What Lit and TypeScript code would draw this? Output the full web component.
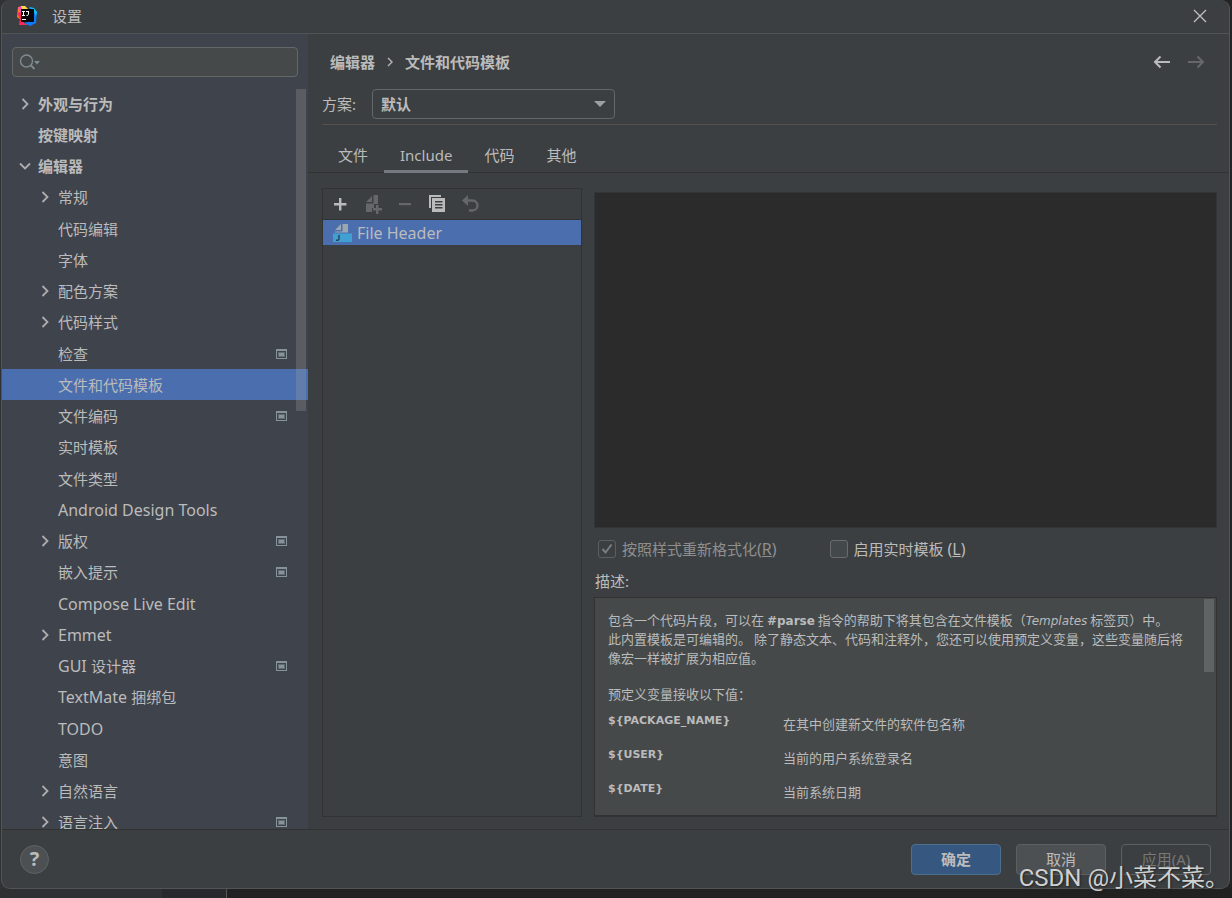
import { LitElement, html, css, svg, nothing } from "lit";
import { customElement, property, state } from "lit/decorators.js";
import { classMap } from "lit/directives/class-map.js";

type Arrow = "open" | "closed" | "";
interface TreeItem {
  label: string;
  level: 0 | 1;
  arrow: Arrow;
  project?: boolean;
}

const item = (label: string, level: 0 | 1 = 1, arrow: Arrow = "", project = false): TreeItem => ({
  label,
  level,
  arrow,
  project,
});

const TREE: TreeItem[] = [
  item("外观与行为", 0, "closed"),
  item("按键映射", 0),
  item("编辑器", 0, "open"),
  item("常规", 1, "closed"),
  item("代码编辑"),
  item("字体"),
  item("配色方案", 1, "closed"),
  item("代码样式", 1, "closed"),
  item("检查", 1, "", true),
  item("文件和代码模板"),
  item("文件编码", 1, "", true),
  item("实时模板"),
  item("文件类型"),
  item("Android Design Tools"),
  item("版权", 1, "closed", true),
  item("嵌入提示", 1, "", true),
  item("Compose Live Edit"),
  item("Emmet", 1, "closed"),
  item("GUI 设计器", 1, "", true),
  item("TextMate 捆绑包"),
  item("TODO"),
  item("意图"),
  item("自然语言", 1, "closed"),
  item("语言注入", 1, "closed", true),
];

const TABS = ["文件", "Include", "代码", "其他"];

const VARIABLES = [
  ["${PACKAGE_NAME}", "在其中创建新文件的软件包名称"],
  ["${USER}", "当前的用户系统登录名"],
  ["${DATE}", "当前系统日期"],
];

const ART: Record<string, unknown> = {
  add: svg`<path d="M9 4h2.400v5h5v2.400h-5v5H9v-5H4V9h5z"/>`,
  addFile: svg`<path d="M9 2v6H3zM10.500 1H15v9h-4v4H9v4H3V9.500h7.500z"/><path d="M13 11h2.500v3H19v2.500h-3.500V20H13v-3.500h-3V14h3z"/>`,
  remove: svg`<path d="M3 9h12v2.200H3z"/>`,
  copy: svg`<path d="M0 1h12v2H2v11H0z"/><path fill-rule="evenodd" d="M3 4h13v14H3zM6 7v1.500h7.500V7zM6 10v1.500h7.500V10zM6 13v1.500h7.500V13z"/>`,
  undo: svg`<path d="M0 6.500 6 1v11z"/><path fill="none" stroke="currentColor" stroke-width="2.300" d="M5 6.500h5.500a5 5 0 0 1 0 10H7"/>`,
};

/** Latin runs are set one size larger than the Chinese text around them. */
const mixed = (text: string) =>
  text.split(/([A-Za-z][A-Za-z ]*)/).filter(Boolean).map((part) => (/^[A-Za-z]/.test(part) ? html`<span class="roman">${part}</span>` : part));

@customElement("tool-icon")
export class ToolIcon extends LitElement {
  @property() name = "";
  static styles = css`
    :host { display: block; width: 20px; height: 20px; }
    .art { display: block; fill: currentColor; }
  `;
  render() {
    return html`<svg class="art" width="20" height="20" viewBox="0 0 20 20" aria-hidden="true">${ART[this.name]}</svg>`;
  }
}

@customElement("settings-tree")
export class SettingsTree extends LitElement {
  @state() private selected = 9;

  static styles = css`
    :host { display: block; position: relative; overflow: hidden; }
    .list { list-style: none; margin: 0; padding: 0; }
    .item { height: 31px; }
    .item:nth-child(4n) { height: 32px; }
    .row {
      display: flex; align-items: center; box-sizing: border-box;
      width: 100%; height: 31px; padding: 0 20px 0 16px; border: 0;
      background: none; color: #bbbbbb; font: inherit; text-align: left;
    }
    .nested { padding-left: 36px; }
    .bold { font-weight: 700; }
    .selected { background: #4b6eaf; }
    .twist { flex: none; width: 20px; height: 16px; }
    .label { flex: 1; white-space: pre; }
    .roman { font-size: 16px; }
    .mark { flex: none; }
    .thumb {
      position: absolute; top: 1px; right: 2px; width: 10px; height: 322px;
      background: rgba(166, 166, 166, 0.26);
    }
  `;

  private twist(arrow: Arrow) {
    const d = arrow === "open" ? "M2 5.500 7 10.500 12 5.500" : "M4.500 3 9.500 8 4.500 13";
    return html`<svg class="twist" viewBox="0 0 20 16" aria-hidden="true">
      ${arrow ? svg`<path d=${d} fill="none" stroke="#adadad" stroke-width="1.800"/>` : nothing}
    </svg>`;
  }

  render() {
    return html`
      <ul class="list">
        ${TREE.map(
          (t, i) => html`<li class="item">
            <button
              class=${classMap({ row: true, nested: t.level === 1, bold: t.level === 0, selected: i === this.selected })}
              @click=${() => (this.selected = i)}
            >
              ${this.twist(t.arrow)}<span class="label">${mixed(t.label)}</span>
              ${t.project
                ? html`<svg class="mark" width="12" height="12" viewBox="0 0 12 12" aria-hidden="true">
                    <path fill="#87939a" fill-rule="evenodd" d="M0 1h11v10H0zM1 3v7h9V3z" />
                    <path fill="#626b73" d="M2 4h7v5H2z" />
                    <path fill="#87939a" d="M3 5h5v3H3z" />
                  </svg>`
                : nothing}
            </button>
          </li>`
        )}
      </ul>
      <div class="thumb"></div>
    `;
  }
}

@customElement("app-root")
export class AppRoot extends LitElement {
  @state() private tab = 1;

  static styles = css`
    :host {
      display: flex; position: relative; box-sizing: border-box; height: 100vh; padding: 0 2px 9px 1px;
      overflow: hidden; color: #bbbbbb;
      font: 15px/20px "Noto Sans", "Noto Sans CJK SC", sans-serif;
      background:
        linear-gradient(90deg, #2f3031 162px, #28292b 162px, #28292b 226px, #555657 226px, #555657 227px, #222121 227px) bottom / 100% 10px no-repeat,
        linear-gradient(90deg, #303234 50%, #242424 50%);
    }
    .window {
      flex: 1; min-width: 0; display: flex; flex-direction: column;
      border: 1px solid #515456; border-top: 0; border-radius: 9px; overflow: hidden;
      background: #3c3f41;
    }
    .titlebar {
      display: flex; align-items: center; height: 32px; flex: none;
      padding: 0 20px 1px 14px; border-bottom: 1px solid #515456;
    }
    .logo { margin-right: 14px; }
    .title { flex: 1; margin: 0; font-size: 15px; font-weight: 400; }
    .plain { display: block; padding: 0; border: 0; background: none; color: inherit; font: inherit; }
    .plain svg { display: block; }
    .roman { font-size: 16px; }

    .body { flex: 1; min-height: 0; display: flex; }
    .sidebar { flex: none; width: 306px; display: flex; flex-direction: column; background: #3f434c; }
    .search {
      display: flex; align-items: center; flex: none; height: 28px; margin: 13px 10px 11px;
      border: 1px solid #646869; border-radius: 4px; background: #45494a;
    }
    .search svg { flex: none; margin-left: 6px; }
    .query {
      flex: 1; min-width: 0; height: 24px; padding: 0 6px; border: 0; outline: 0;
      background: none; color: inherit; font: inherit;
    }
    .tree { flex: 1; min-height: 0; }

    .main { flex: 1; min-width: 0; display: flex; flex-direction: column; }
    .crumbs { display: flex; align-items: center; flex: none; height: 55px; padding: 0 24px 0 22px; font-weight: 700; }
    .crumbs-path { flex: 1; display: flex; align-items: center; gap: 10px; }
    .history { display: flex; gap: 16px; }
    .off { color: #656768; }
    .scheme {
      display: flex; align-items: center; flex: none; height: 30px; margin: 0 12px 0 14px;
      padding-bottom: 5px; border-bottom: 1px solid #55514f;
    }
    .scheme label { width: 50px; }
    .picker { display: grid; align-items: center; width: 243px; }
    .picker select, .picker svg { grid-area: 1 / 1; }
    .picker svg { justify-self: end; margin-right: 9px; pointer-events: none; }
    .choice {
      appearance: none; box-sizing: border-box; height: 30px; padding: 0 30px 0 8px;
      border: 1px solid #646869; border-radius: 4px; background: #3c3f41;
      color: inherit; font: inherit; font-weight: 700;
    }
    .tabs { display: flex; flex: none; height: 47px; padding-left: 14px; border-bottom: 1px solid #323232; }
    .tab {
      box-sizing: border-box; height: 48px; padding: 20px 16px 5px; border: 0;
      border-bottom: 3px solid transparent; background: none; color: inherit; font: inherit;
    }
    .tab.current { border-bottom-color: #747a80; }

    .split { flex: 1; min-height: 0; display: flex; gap: 12px; padding: 15px 12px 12px 14px; }
    .templates { flex: none; width: 258px; display: flex; flex-direction: column; border: 1px solid #323232; }
    .toolbar { display: flex; align-items: center; flex: none; height: 30px; padding-left: 7px; gap: 13px; border-bottom: 1px solid #323232; }
    .files { list-style: none; margin: 0; padding: 0; }
    .file { display: flex; align-items: center; gap: 5px; height: 25px; padding-left: 9px; background: #4b6eaf; }

    .details { flex: 1; min-width: 0; display: flex; flex-direction: column; padding-top: 4px; }
    .editor {
      flex: 1; min-height: 0; display: block; box-sizing: border-box; width: 100%; margin: 0; padding: 4px 8px;
      border: 1px solid #333536; outline: 0; resize: none; background: #2b2b2b; color: #a9b7c6;
      font: 15px/20px "Liberation Mono", "Noto Sans CJK SC", monospace;
    }
    .options { display: flex; flex: none; align-items: center; gap: 53px; height: 41px; padding-left: 4px; }
    .option { display: flex; align-items: center; gap: 6px; white-space: nowrap; }
    .option.dim { color: #8e8f90; }
    .tick { display: grid; place-items: center; }
    .tick input, .tick svg { grid-area: 1 / 1; }
    .box {
      appearance: none; box-sizing: border-box; width: 18px; height: 18px; margin: 0;
      border: 1px solid #6b6b6b; border-radius: 3px; background: #43494a;
    }
    .box:disabled { border-color: #5c5f60; background: none; }
    .caption { flex: none; height: 28px; padding: 2px 0 0 1px; box-sizing: border-box; }
    .description {
      flex: none; position: relative; box-sizing: border-box; height: 220px; overflow: hidden;
      border: 1px solid #323232; border-bottom-width: 2px; background: #45494a; padding: 12px 20px 0 13px;
      font: 13px/19px "Noto Sans CJK SC", sans-serif;
    }
    .inset { font-family: "DejaVu Sans", sans-serif; font-size: 12px; line-height: 1; }
    .text { margin: 0 0 17px; white-space: nowrap; }
    .vars { border-collapse: collapse; margin-top: -9px; }
    .vars th {
      width: 175px; padding: 0; vertical-align: top; text-align: left;
      font: 700 11px/19px "DejaVu Sans", sans-serif;
    }
    .vars td { height: 34px; padding: 3px 0 0; box-sizing: border-box; vertical-align: top; }
    .thumb { position: absolute; top: 1px; right: 2px; width: 10px; height: 73px; background: #5f6364; }

    .footer {
      display: flex; align-items: center; flex: none; height: 59px; box-sizing: border-box;
      padding: 0 18px; gap: 15px; border-top: 1px solid #323232;
    }
    .help {
      width: 29px; height: 29px; margin-right: auto; padding: 0; border: 1px solid #5e6364; border-radius: 50%;
      background: #4c5052; color: #bbbbbb; font: 700 20px/20px "Noto Sans", sans-serif;
    }
    .action {
      box-sizing: border-box; width: 90px; height: 31px; padding: 0; border: 1px solid #5e6060; border-radius: 4px;
      background: #4c5052; color: #bbbbbb; font: inherit;
    }
    .primary { border-color: #4c708c; background: #365880; font-weight: 700; }
    .action:disabled { background: none; color: #777777; }
    .stamp {
      position: absolute; right: 3px; bottom: 6px; pointer-events: none; white-space: nowrap;
      color: #cfd0d0; font: 24px/28px Roboto, "Noto Sans CJK SC", sans-serif;
      text-shadow: 1px 1px 2px #222222;
    }
  `;

  private arrow(back: boolean) {
    return html`<svg width="18" height="16" viewBox="0 0 18 16" aria-hidden="true">
      <path
        d=${back ? "M17 8H2M7.500 2.500 2 8l5.500 5.500" : "M1 8h15M10.500 2.500 16 8l-5.500 5.500"}
        fill="none" stroke="currentColor" stroke-width="2"
      />
    </svg>`;
  }

  render() {
    return html`
      <section class="window">
        <header class="titlebar">
          <svg class="logo" width="22" height="22" viewBox="0 0 22 22" aria-hidden="true">
            <path fill="#fc801d" d="M2 2 9 1 13 6 6 16 1 12z" />
            <path fill="#fe2857" d="M1 8 6 6 8 18 12 20 3 20 4 14z" />
            <path fill="#f94fc0" d="M2 3 5 1 8 4 5 9z" />
            <path fill="#ffd94a" d="M5 1h4l3 3H6z" />
            <path fill="#087cfa" d="M13 2 17 3 21 7 20 18 14 21 8 18 16 16z" />
            <path fill="#07c3f2" d="M13 2 18 3 21 7 20 11 17 5z" />
            <path fill="#0a0509" d="M5 4h13v13H5z" />
            <path fill="none" stroke="#ffffff" d="M6 6.500h3M7.500 6v4M6 10.500h3M10 6.500h3M12.500 6v3.500q0 1-2 1M6 14.500h4" />
          </svg>
          <h1 class="title">设置</h1>
          <button class="plain" aria-label="关闭">
            <svg width="18" height="18" viewBox="0 0 18 18"><path d="M3 3 15 15M15 3 3 15" fill="none" stroke="#c0c0c0" stroke-width="1.300" /></svg>
          </button>
        </header>

        <div class="body">
          <aside class="sidebar">
            <div class="search">
              <svg width="24" height="20" viewBox="0 0 24 20" aria-hidden="true">
                <circle cx="7.500" cy="9" r="6" fill="none" stroke="#7f8b91" stroke-width="1.400" />
                <path d="M12 13.500 15.500 17" stroke="#7f8b91" stroke-width="1.800" />
                <path d="M15 9h6l-3 3.500z" fill="#7f8b91" />
              </svg>
              <input class="query" type="text" aria-label="搜索" />
            </div>
            <settings-tree class="tree"></settings-tree>
          </aside>

          <main class="main">
            <div class="crumbs">
              <div class="crumbs-path">
                <span>编辑器</span>
                <svg width="10" height="12" viewBox="0 0 10 12" aria-hidden="true"><path d="M3 2 7 6 3 10" fill="none" stroke="#b5b5b5" stroke-width="1.400" /></svg>
                <span>文件和代码模板</span>
              </div>
              <div class="history">
                <button class="plain" aria-label="后退">${this.arrow(true)}</button>
                <button class="plain off" aria-label="前进" disabled>${this.arrow(false)}</button>
              </div>
            </div>

            <div class="scheme">
              <label for="scheme">方案:</label>
              <div class="picker">
                <select id="scheme" class="choice"><option>默认</option></select>
                <svg width="12" height="8" viewBox="0 0 12 8" aria-hidden="true"><path d="M0 1h12L6 7z" fill="#9da0a2" /></svg>
              </div>
            </div>

            <nav class="tabs">
              ${TABS.map(
                (t, i) => html`<button class=${classMap({ tab: true, current: i === this.tab })} @click=${() => (this.tab = i)}>${t}</button>`
              )}
            </nav>

            <div class="split">
              <section class="templates">
                <div class="toolbar">
                  <button class="plain" aria-label="添加"><tool-icon name="add"></tool-icon></button>
                  <button class="plain off" aria-label="添加子模板" disabled><tool-icon name="addFile"></tool-icon></button>
                  <button class="plain off" aria-label="移除" disabled><tool-icon name="remove"></tool-icon></button>
                  <button class="plain" aria-label="复制"><tool-icon name="copy"></tool-icon></button>
                  <button class="plain off" aria-label="还原" disabled><tool-icon name="undo"></tool-icon></button>
                </div>
                <ul class="files">
                  <li class="file">
                    <svg width="20" height="20" viewBox="0 0 20 20" aria-hidden="true">
                      <path fill="#9aa7b0" d="M9 1v6H3zM10.500 1H16v8.500H3V8.500h7.500z" />
                      <path fill="#40a0d2" d="M1 10.500h19V19H1z" />
                      <path fill="none" stroke="#24455c" stroke-width="1.500" d="M7 12v4q0 1.500-3 1.300" />
                    </svg>
                    <span class="roman">File Header</span>
                  </li>
                </ul>
              </section>

              <section class="details">
                <textarea class="editor" aria-label="模板" readonly></textarea>
                <div class="options">
                  <label class="option dim">
                    <span class="tick">
                      <input class="box" type="checkbox" checked disabled />
                      <svg width="14" height="14" viewBox="0 0 14 14" aria-hidden="true"><path d="M2.500 7 5.500 10.500 11.500 2.500" fill="none" stroke="#7b7d7e" stroke-width="2" /></svg>
                    </span>
                    <span>按照样式重新格式化<span class="roman">(<u>R</u>)</span></span>
                  </label>
                  <label class="option">
                    <input class="box" type="checkbox" />
                    <span>启用实时模板 <span class="roman">(<u>L</u>)</span></span>
                  </label>
                </div>
                <div class="caption">描述:</div>
                <div class="description">
                  <p class="text">
                    包含一个代码片段，可以在 <b class="inset">#parse</b> 指令的帮助下将其包含在文件模板（<i class="inset">Templates</i> 标签页）中。<br />此内置模板是可编辑的。 除了静态文本、代码和注释外，您还可以使用预定义变量，这些变量随后将<br />像宏一样被扩展为相应值。
                  </p>
                  <p class="text">预定义变量接收以下值：</p>
                  <table class="vars">
                    <tbody>
                      ${VARIABLES.map(([name, text]) => html`<tr><th scope="row">${name}</th><td>${text}</td></tr>`)}
                    </tbody>
                  </table>
                  <div class="thumb"></div>
                </div>
              </section>
            </div>
          </main>
        </div>

        <footer class="footer">
          <button class="help" aria-label="帮助">?</button>
          <button class="action primary">确定</button>
          <button class="action">取消</button>
          <button class="action" disabled>应用(A)</button>
        </footer>
      </section>
      <div class="stamp">CSDN @小菜不菜。</div>
    `;
  }
}
